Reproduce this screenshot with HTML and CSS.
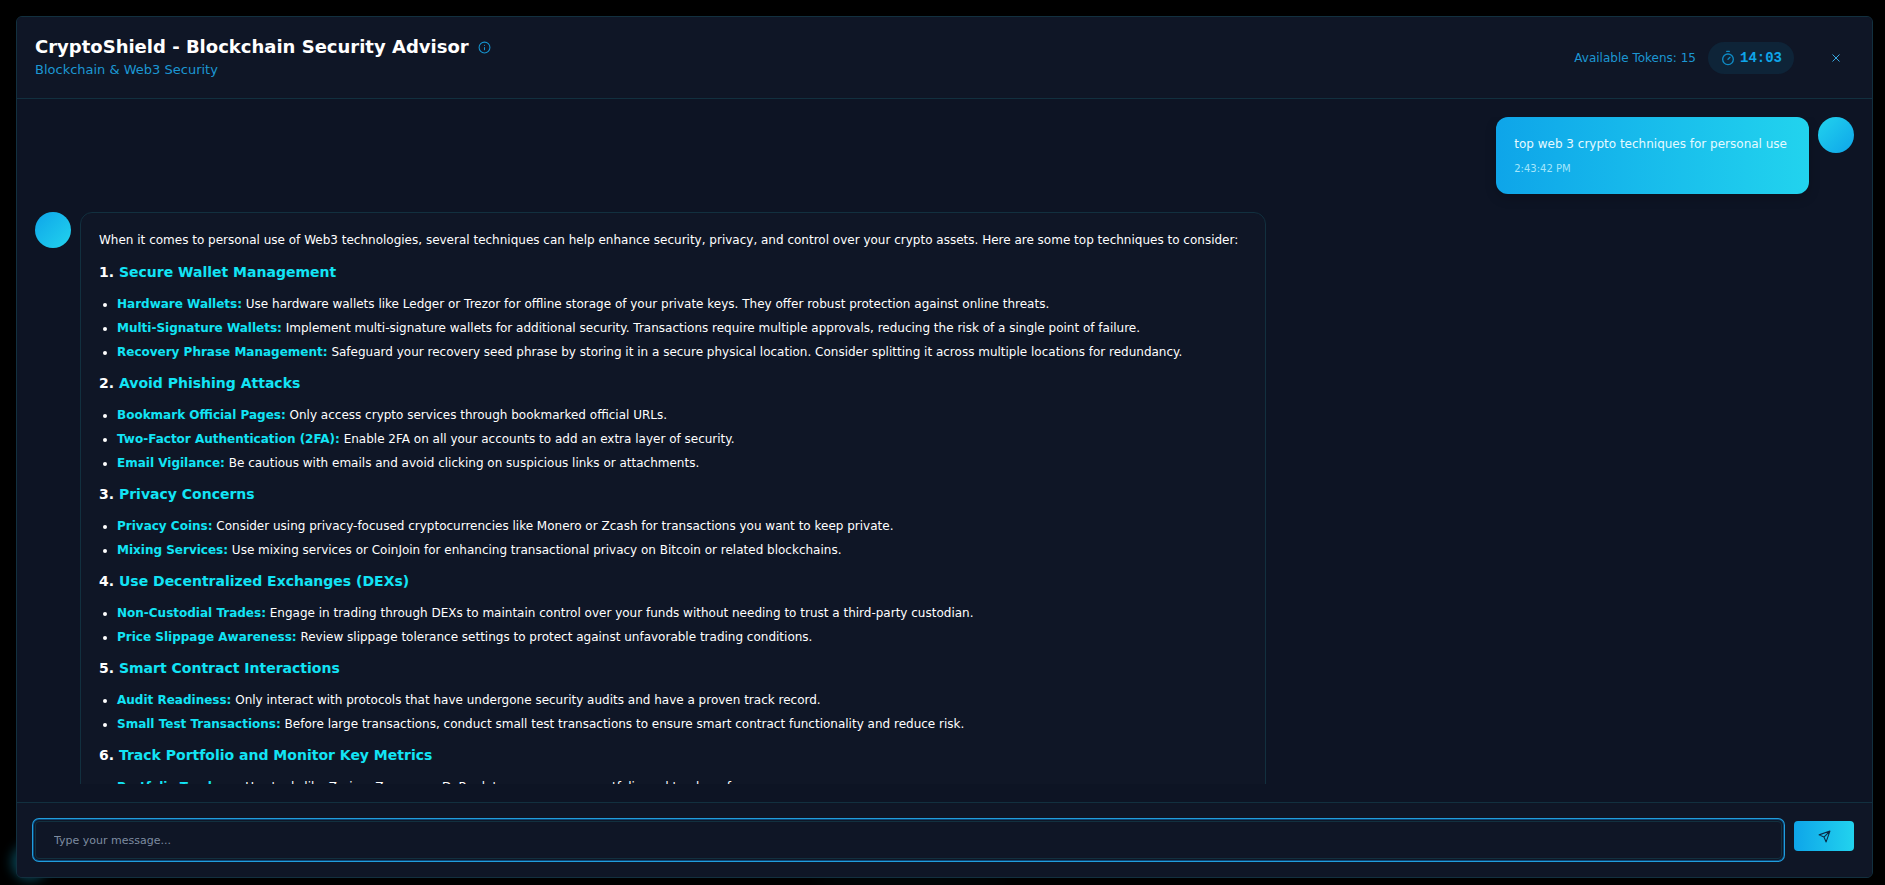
FILE: index.html
```html
<!DOCTYPE html>
<html lang="en">
<head>
  <meta charset="UTF-8" />
  <meta name="viewport" content="width=device-width, initial-scale=1.0"/>
  <title>CryptoShield - Blockchain Security Advisor</title>
  <link rel="stylesheet" href="styles.css">
</head>
<body>
  <div class="glow glow-left"></div>
  <div class="glow glow-center"></div>
  <main class="chat">
    <header class="chat-header">
      <div class="chat-title">
        <div class="title-row">
          <h1>CryptoShield - Blockchain Security Advisor</h1>
          <button type="button" class="info-button" aria-label="About this advisor">
            <svg viewBox="0 0 24 24" width="13" height="13" fill="none" stroke="currentColor" stroke-width="2" stroke-linecap="round">
              <circle cx="12" cy="12" r="10"/>
              <path d="M12 16v-4M12 8h.01"/>
            </svg>
          </button>
        </div>
        <p class="subtitle">Blockchain &amp; Web3 Security</p>
      </div>
      <div class="chat-status">
        <span class="tokens">Available Tokens: 15</span>
        <div class="timer">
          <svg viewBox="0 0 24 24" width="16" height="16" fill="none" stroke="currentColor" stroke-width="2" stroke-linecap="round">
            <path d="M10 2h4M12 14l3-3"/>
            <circle cx="12" cy="14" r="8"/>
          </svg>
          <span class="time-left">14:03</span>
        </div>
        <button type="button" class="close-button" aria-label="Close chat">
          <svg viewBox="0 0 8 8" width="8" height="8" fill="none" stroke="currentColor" stroke-width="1">
            <path d="M0.5 0.5l7 7M7.5 0.5l-7 7"/>
          </svg>
        </button>
      </div>
    </header>

    <section class="messages">
      <div class="message user">
        <div class="avatar"></div>
        <div class="bubble">
          <p>top web 3 crypto techniques for personal use</p>
          <time>2:43:42 PM</time>
        </div>
      </div>

      <div class="message bot">
        <div class="avatar"></div>
        <div class="bubble">
          <p>When it comes to personal use of Web3 technologies, several techniques can help enhance security, privacy, and control over your crypto assets. Here are some top techniques to consider:</p>
          <h3>1. <strong>Secure Wallet Management</strong></h3>
          <ul>
            <li><strong>Hardware Wallets:</strong> Use hardware wallets like Ledger or Trezor for offline storage of your private keys. They offer robust protection against online threats.</li>
            <li><strong>Multi-Signature Wallets:</strong> Implement multi-signature wallets for additional security. Transactions require multiple approvals, reducing the risk of a single point of failure.</li>
            <li><strong>Recovery Phrase Management:</strong> Safeguard your recovery seed phrase by storing it in a secure physical location. Consider splitting it across multiple locations for redundancy.</li>
          </ul>
          <h3>2. <strong>Avoid Phishing Attacks</strong></h3>
          <ul>
            <li><strong>Bookmark Official Pages:</strong> Only access crypto services through bookmarked official URLs.</li>
            <li><strong>Two-Factor Authentication (2FA):</strong> Enable 2FA on all your accounts to add an extra layer of security.</li>
            <li><strong>Email Vigilance:</strong> Be cautious with emails and avoid clicking on suspicious links or attachments.</li>
          </ul>
          <h3>3. <strong>Privacy Concerns</strong></h3>
          <ul>
            <li><strong>Privacy Coins:</strong> Consider using privacy-focused cryptocurrencies like Monero or Zcash for transactions you want to keep private.</li>
            <li><strong>Mixing Services:</strong> Use mixing services or CoinJoin for enhancing transactional privacy on Bitcoin or related blockchains.</li>
          </ul>
          <h3>4. <strong>Use Decentralized Exchanges (DEXs)</strong></h3>
          <ul>
            <li><strong>Non-Custodial Trades:</strong> Engage in trading through DEXs to maintain control over your funds without needing to trust a third-party custodian.</li>
            <li><strong>Price Slippage Awareness:</strong> Review slippage tolerance settings to protect against unfavorable trading conditions.</li>
          </ul>
          <h3>5. <strong>Smart Contract Interactions</strong></h3>
          <ul>
            <li><strong>Audit Readiness:</strong> Only interact with protocols that have undergone security audits and have a proven track record.</li>
            <li><strong>Small Test Transactions:</strong> Before large transactions, conduct small test transactions to ensure smart contract functionality and reduce risk.</li>
          </ul>
          <h3>6. <strong>Track Portfolio and Monitor Key Metrics</strong></h3>
          <ul>
            <li><strong>Portfolio Trackers:</strong> Use tools like Zerion, Zapper, or DeBank to manage your portfolio and track performance.</li>
          </ul>
        </div>
      </div>
    </section>

    <form class="composer" onsubmit="return false;">
      <input type="text" class="message-input" placeholder="Type your message..." aria-label="Message">
      <button type="submit" class="send-button" aria-label="Send message">
        <svg viewBox="0 0 24 24" width="13" height="13" fill="none" stroke="currentColor" stroke-width="2" stroke-linecap="round" stroke-linejoin="round">
          <path d="M22 2L11 13M22 2l-7 20-4-9-9-4z"/>
        </svg>
      </button>
    </form>
  </main>
</body>
</html>
```
FILE: styles.css
```css
:root {
  --primary: #0ea5e9;
  --secondary: #22d3ee;
  --accent: #12e4f5;
  --panel: #0f1626;
  --panel-dark: #0d1424;
  --line: #12303f;
}

* {
  box-sizing: border-box;
}

body {
  margin: 0;
  height: 100vh;
  padding: 16px 12px 7px 16px;
  overflow: hidden;
  background: #000;
  color: #fff;
  font-family: "DejaVu Sans", sans-serif;
  font-size: 12px;
  line-height: 18px;
}

h1, h3, p, ul {
  margin: 0;
}

button {
  padding: 0;
  border: none;
  background: none;
  cursor: pointer;
}

svg {
  display: block;
}

/* blurred lights behind the panel */
.glow {
  position: absolute;
  border-radius: 50%;
  background: #0e7490;
  filter: blur(6px);
}

.glow-left {
  left: 12px;
  bottom: 5px;
  width: 36px;
  height: 36px;
  opacity: 0.6;
}

.glow-center {
  left: 43%;
  bottom: 0;
  width: 200px;
  height: 8px;
  opacity: 0.1;
}

.chat {
  position: relative;
  display: flex;
  flex-direction: column;
  height: 100%;
  border: 1px solid var(--line);
  border-radius: 6px;
  background: var(--panel-dark);
  overflow: hidden;
}

.chat-header {
  display: flex;
  justify-content: space-between;
  align-items: center;
  padding: 18px;
  border-bottom: 1px solid var(--line);
  background: var(--panel);
}

.title-row {
  display: flex;
  align-items: center;
  gap: 9px;
}

h1 {
  font-size: 18px;
  line-height: 24px;
}

.info-button {
  color: #1591cc;
}

.subtitle {
  color: #1c97d3;
  font-size: 13px;
  line-height: 21px;
}

.chat-status {
  display: flex;
  align-items: center;
  gap: 12px;
  color: var(--primary);
}

.tokens {
  color: #1c97d3;
}

.timer {
  display: flex;
  align-items: center;
  gap: 4px;
  padding: 7px 12px;
  border-radius: 18px;
  background: #0e2438;
}

.timer svg {
  opacity: 0.8;
}

.time-left {
  font: bold 14px/18px "Liberation Mono", monospace;
}

.close-button {
  display: grid;
  place-items: center;
  width: 36px;
  height: 36px;
  margin-left: 12px;
  color: #38a8e0;
}

.messages {
  display: flex;
  flex: 1;
  flex-direction: column;
  gap: 18px;
  min-height: 0;
  margin: 18px;
  overflow: hidden;
}

.message {
  display: flex;
  flex-shrink: 0;
  align-items: flex-start;
  gap: 9px;
}

.message.user {
  flex-direction: row-reverse;
}

.avatar {
  flex-shrink: 0;
  width: 36px;
  height: 36px;
  border-radius: 50%;
  background: linear-gradient(135deg, var(--primary), var(--secondary));
}

.user .avatar {
  background: linear-gradient(135deg, var(--secondary), var(--primary));
}

.bubble {
  max-width: 66%;
  padding: 18px 22px 18px 18px;
  border-radius: 12px;
}

.user .bubble {
  background: linear-gradient(90deg, var(--primary), var(--secondary));
  box-shadow: 0 4px 12px rgba(0, 0, 0, 0.2);
}

.bot .bubble {
  width: 65.2%;
  border: 1px solid var(--line);
  background: var(--panel);
}

.user p {
  color: #e6faff;
}

.bot p {
  margin-bottom: 13px;
}

time {
  display: block;
  margin-top: 8px;
  color: #a5e6fb;
  font-size: 10px;
  line-height: 15px;
}

h3 {
  margin: 12px 0;
  font-size: 14px;
  line-height: 21px;
}

.bubble strong {
  color: var(--accent);
}

ul {
  padding-left: 18px;
}

li + li {
  margin-top: 6px;
}

.composer {
  display: flex;
  align-items: flex-start;
  gap: 12px;
  padding: 18px;
  border-top: 1px solid var(--line);
  background: var(--panel);
}

.message-input {
  flex: 1;
  height: 38px;
  padding: 0 18px;
  border: 1px solid var(--line);
  border-radius: 4px;
  outline: none;
  box-shadow: 0 0 0 1px var(--panel), 0 0 0 2px #0a4674, 0 0 0 3px #219ddc;
  background: var(--panel);
  color: #fff;
  font-family: inherit;
  font-size: 11px;
}

.message-input::placeholder {
  color: #7d8ba0;
}

.send-button {
  display: grid;
  place-items: center;
  width: 60px;
  height: 30px;
  border-radius: 4px;
  background: linear-gradient(90deg, var(--primary), var(--secondary));
  color: #0b2a45;
}
```
